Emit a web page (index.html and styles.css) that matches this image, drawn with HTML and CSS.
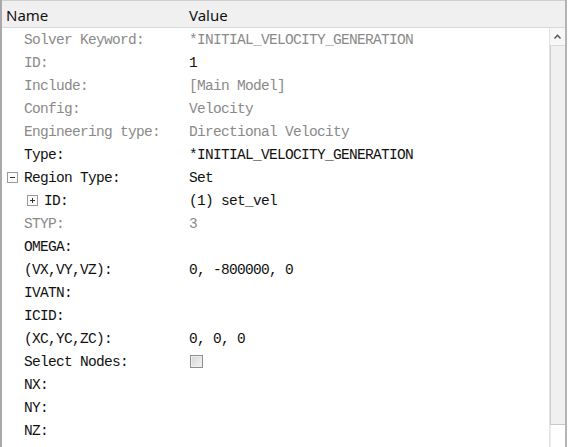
FILE: index.html
```html
<!DOCTYPE html>
<html>
<head>
<meta charset="utf-8">
<link rel="stylesheet" href="styles.css">
</head>
<body>
<div class="panel">
  <div class="header">
    <div class="hcell hname">Name</div>
    <div class="hcell hval">Value</div>
  </div>
  <div class="body">
    <div class="list">
      <div class="row"><div class="name muted"><span class="slot"></span>Solver Keyword:</div><div class="val muted">*INITIAL_VELOCITY_GENERATION</div></div>
      <div class="row"><div class="name muted"><span class="slot"></span>ID:</div><div class="val">1</div></div>
      <div class="row"><div class="name muted"><span class="slot"></span>Include:</div><div class="val muted">[Main Model]</div></div>
      <div class="row"><div class="name muted"><span class="slot"></span>Config:</div><div class="val muted">Velocity</div></div>
      <div class="row"><div class="name muted"><span class="slot"></span>Engineering type:</div><div class="val muted">Directional Velocity</div></div>
      <div class="row"><div class="name"><span class="slot"></span>Type:</div><div class="val">*INITIAL_VELOCITY_GENERATION</div></div>
      <div class="row"><div class="name"><span class="slot"><span class="tog minus"></span></span>Region Type:</div><div class="val">Set</div></div>
      <div class="row"><div class="name"><span class="slot indent"><span class="tog plus"></span></span>ID:</div><div class="val">(1) set_vel</div></div>
      <div class="row"><div class="name muted"><span class="slot"></span>STYP:</div><div class="val muted">3</div></div>
      <div class="row"><div class="name"><span class="slot"></span>OMEGA:</div><div class="val"></div></div>
      <div class="row"><div class="name"><span class="slot"></span>(VX,VY,VZ):</div><div class="val">0, -800000, 0</div></div>
      <div class="row"><div class="name"><span class="slot"></span>IVATN:</div><div class="val"></div></div>
      <div class="row"><div class="name"><span class="slot"></span>ICID:</div><div class="val"></div></div>
      <div class="row"><div class="name"><span class="slot"></span>(XC,YC,ZC):</div><div class="val">0, 0, 0</div></div>
      <div class="row"><div class="name"><span class="slot"></span>Select Nodes:</div><div class="val"><span class="check"></span></div></div>
      <div class="row"><div class="name"><span class="slot"></span>NX:</div><div class="val"></div></div>
      <div class="row"><div class="name"><span class="slot"></span>NY:</div><div class="val"></div></div>
      <div class="row"><div class="name"><span class="slot"></span>NZ:</div><div class="val"></div></div>
    </div>
    <div class="scrollbar">
      <div class="sbtn">
        <svg width="7" height="5" viewBox="0 0 7 5"><path d="M0.5 4.5 L3.5 1.2 L6.5 4.5" fill="none" stroke="#505050" stroke-width="1.4"/></svg>
      </div>
      <div class="thumb"></div>
      <div class="track"></div>
    </div>
  </div>
</div>
</body>
</html>
```
FILE: styles.css
```css
html, body {
  margin: 0;
  padding: 0;
  background: #ffffff;
}
.panel {
  width: 563px;
  height: 447px;
  border-left: 2px solid #a9a9a9;
  border-right: 2px solid #b4b4b4;
  display: flex;
  flex-direction: column;
  overflow: hidden;
  box-sizing: content-box;
}
.header {
  flex: none;
  height: 28px;
  border-top: 1px solid #cfcfcf;
  border-bottom: 1px solid #d9d9d9;
  background: #f0f0f0;
  display: flex;
  font-family: "Noto Sans", "Open Sans", sans-serif;
  font-size: 15px;
  color: #111111;
  box-sizing: border-box;
}
.hcell {
  padding-top: 4px;
  line-height: 20px;
}
.hname {
  width: 187px;
  padding-left: 4px;
  box-sizing: border-box;
}
.body {
  flex: 1;
  display: flex;
  min-height: 0;
}
.list {
  flex: 1;
  font-family: "Liberation Mono", monospace;
  font-size: 14.5px;
  letter-spacing: -0.7px;
  color: #111111;
}
.row {
  display: flex;
  height: 23px;
  align-items: center;
  white-space: pre;
}
.name {
  width: 187px;
  flex: none;
  display: flex;
  align-items: center;
  padding-left: 5px;
  box-sizing: border-box;
}
.val {
  flex: 1;
  display: flex;
  align-items: center;
}
.muted {
  color: #8a8a8a;
}
.slot {
  width: 17px;
  flex: none;
  display: flex;
  align-items: center;
}
.slot.indent {
  margin-left: 20px;
}
.tog {
  width: 9px;
  height: 9px;
  border: 1px solid #9a9a9a;
  background: #fafafa;
  position: relative;
  box-sizing: content-box;
}
.tog::before {
  content: "";
  position: absolute;
  left: 2px;
  top: 4px;
  width: 5px;
  height: 1px;
  background: #333;
}
.tog.plus::after {
  content: "";
  position: absolute;
  left: 4px;
  top: 2px;
  width: 1px;
  height: 5px;
  background: #333;
}
.check {
  display: block;
  width: 11px;
  height: 11px;
  margin-left: 1px;
  border: 1px solid #8e8e8e;
  background: linear-gradient(135deg, #d4d4d4, #f4f4f4);
  box-shadow: inset 0 0 0 1px #eeeeee;
}
.scrollbar {
  width: 15px;
  flex: none;
  display: flex;
  flex-direction: column;
  border-left: 1px solid #e3e3e3;
}
.sbtn {
  height: 17px;
  flex: none;
  display: flex;
  align-items: center;
  justify-content: center;
  background: #f7f7f7;
  border-bottom: 1px solid #dadada;
}
.thumb {
  height: 378px;
  flex: none;
  background: #f0f0f0;
  border-left: 1px solid #cdcdcd;
  border-bottom: 1px solid #c8c8c8;
}
.track {
  flex: 1;
  background: #ffffff;
  border-left: 1px solid #ececec;
}
```
